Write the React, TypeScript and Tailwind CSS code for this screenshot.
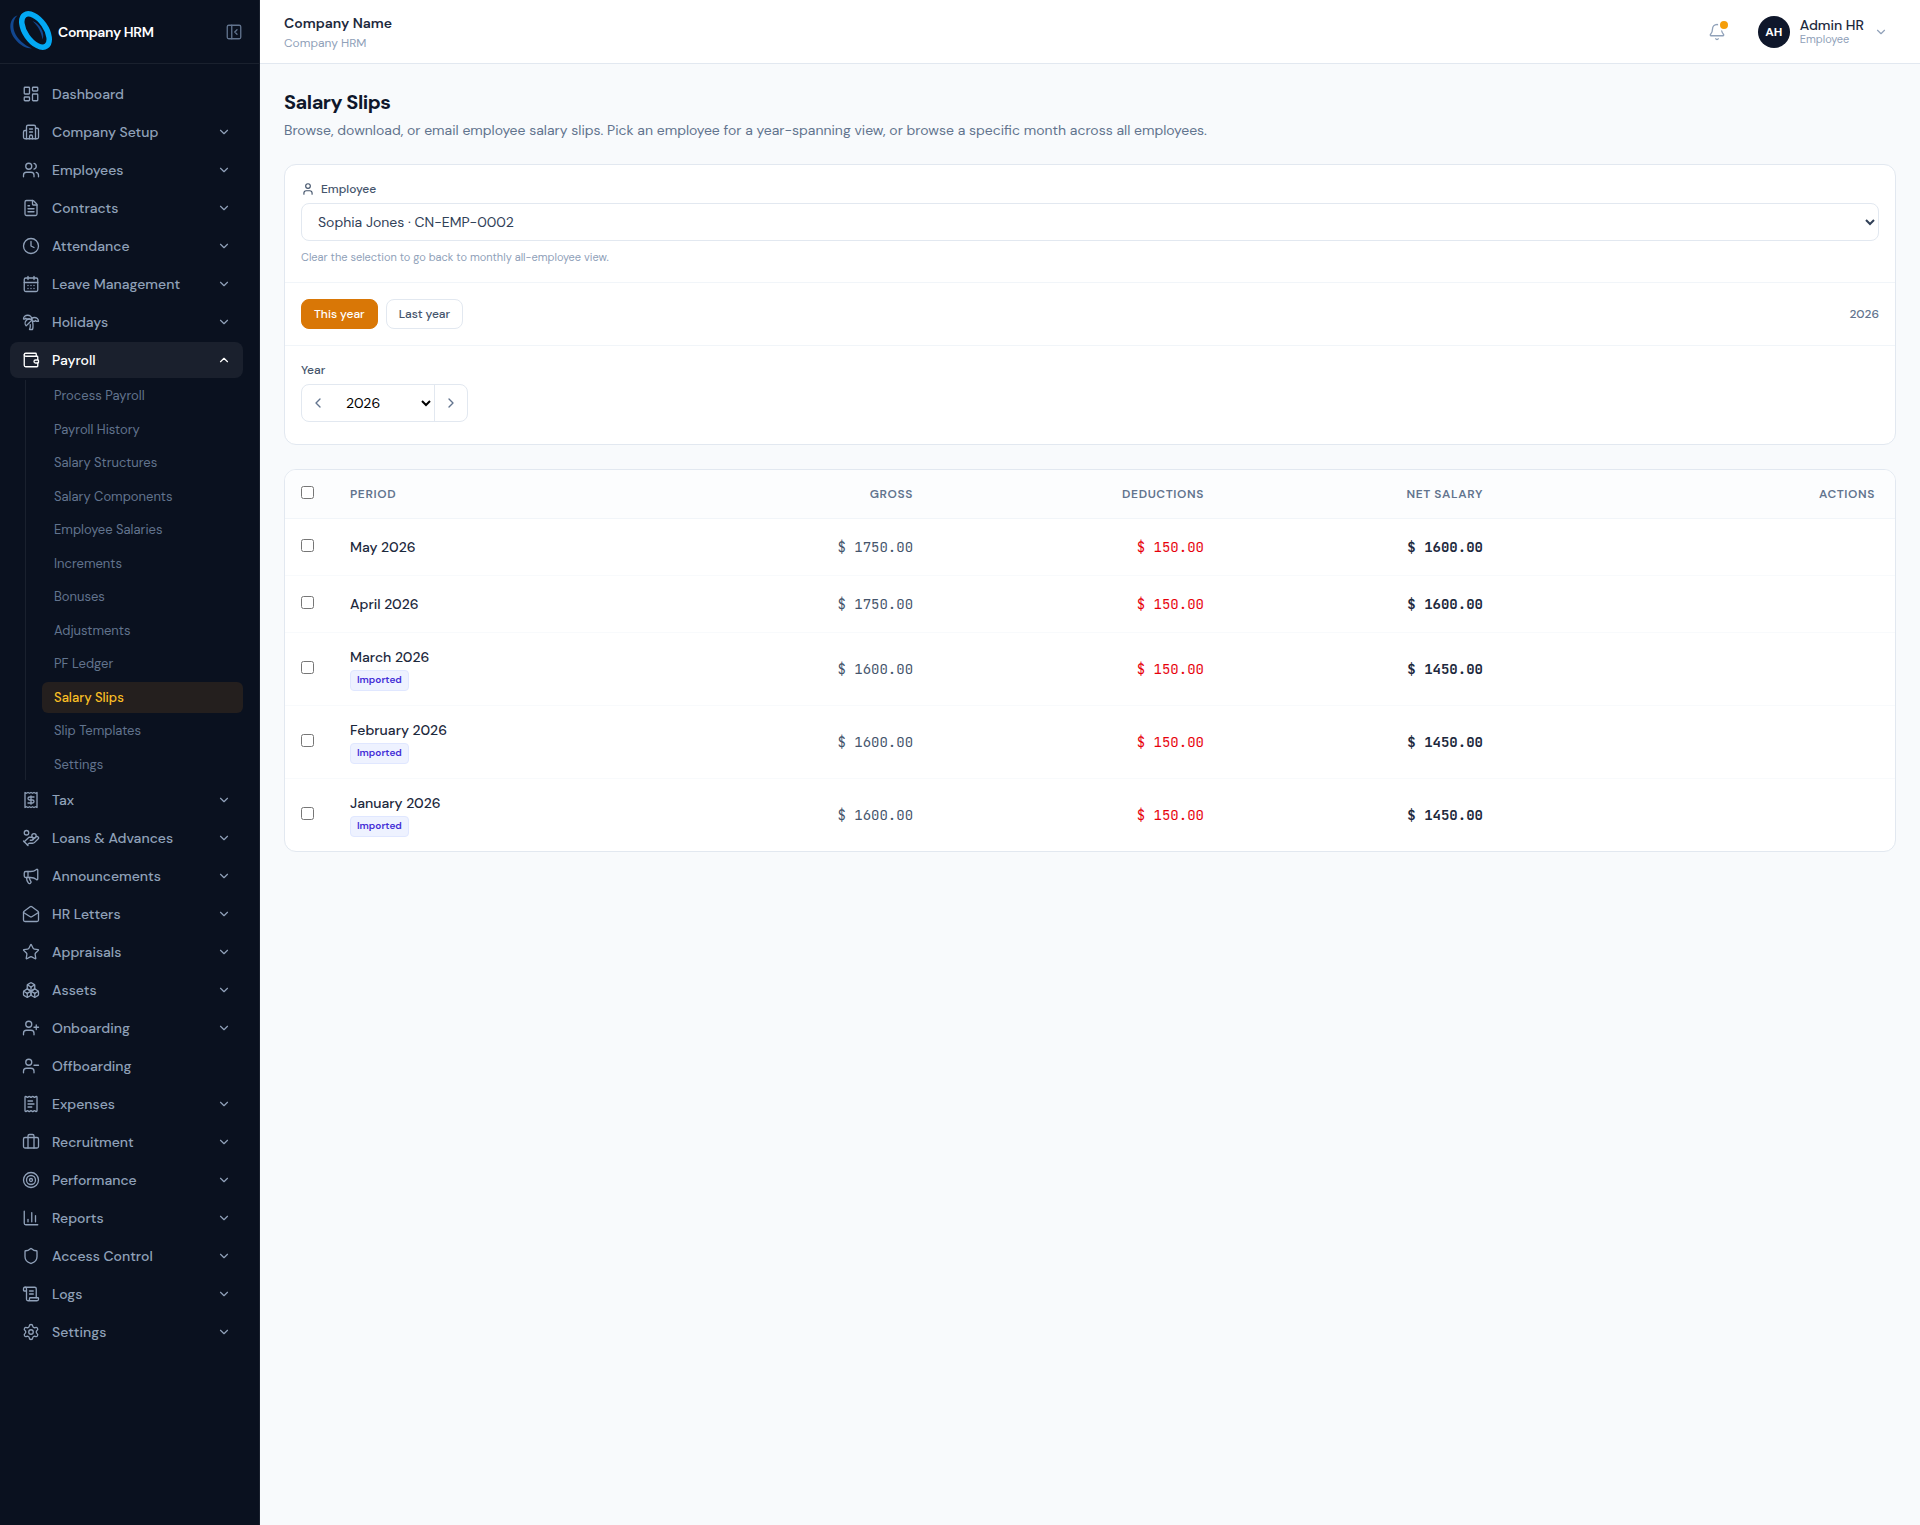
import { useState } from "react";
import {
  Boxes,
  Briefcase,
  Building2,
  CalendarDays,
  ChartColumn,
  ChevronDown,
  ChevronLeft,
  ChevronRight,
  ChevronUp,
  Clock,
  FileText,
  HandCoins,
  LayoutDashboard,
  MailOpen,
  Megaphone,
  PanelLeftClose,
  Receipt,
  ReceiptText,
  ScrollText,
  Settings,
  Shield,
  Star,
  Target,
  TreePalm,
  User,
  UserMinus,
  UserPlus,
  Users,
  Wallet,
  type LucideIcon,
} from "lucide-react";

type NavItem = { label: string; icon: LucideIcon; leaf?: boolean; children?: string[] };

const NAV: NavItem[] = [
  { label: "Dashboard", icon: LayoutDashboard, leaf: true },
  { label: "Company Setup", icon: Building2 },
  { label: "Employees", icon: Users },
  { label: "Contracts", icon: FileText },
  { label: "Attendance", icon: Clock },
  { label: "Leave Management", icon: CalendarDays },
  { label: "Holidays", icon: TreePalm },
  {
    label: "Payroll",
    icon: Wallet,
    children: [
      "Process Payroll",
      "Payroll History",
      "Salary Structures",
      "Salary Components",
      "Employee Salaries",
      "Increments",
      "Bonuses",
      "Adjustments",
      "PF Ledger",
      "Salary Slips",
      "Slip Templates",
      "Settings",
    ],
  },
  { label: "Tax", icon: Receipt },
  { label: "Loans & Advances", icon: HandCoins },
  { label: "Announcements", icon: Megaphone },
  { label: "HR Letters", icon: MailOpen },
  { label: "Appraisals", icon: Star },
  { label: "Assets", icon: Boxes },
  { label: "Onboarding", icon: UserPlus },
  { label: "Offboarding", icon: UserMinus, leaf: true },
  { label: "Expenses", icon: ReceiptText },
  { label: "Recruitment", icon: Briefcase },
  { label: "Performance", icon: Target },
  { label: "Reports", icon: ChartColumn },
  { label: "Access Control", icon: Shield },
  { label: "Logs", icon: ScrollText },
  { label: "Settings", icon: Settings },
];

const SLIPS = [
  { period: "May 2026", gross: "1750.00", deductions: "150.00", net: "1600.00", imported: false },
  { period: "April 2026", gross: "1750.00", deductions: "150.00", net: "1600.00", imported: false },
  { period: "March 2026", gross: "1600.00", deductions: "150.00", net: "1450.00", imported: true },
  { period: "February 2026", gross: "1600.00", deductions: "150.00", net: "1450.00", imported: true },
  { period: "January 2026", gross: "1600.00", deductions: "150.00", net: "1450.00", imported: true },
];

function Logo() {
  return (
    <svg viewBox="0 0 44 44" className="size-11 shrink-0" fill="none" aria-hidden="true">
      <path d="M9.5 5.5C1 8 0 20 7 29c5 6.5 11 9.5 17 9.5C16 35 9 29 6.5 22 4.5 16 5 9 9.5 5.5Z" fill="#12478f" />
      <path d="M24.5 11c7 2.5 13 12 10 18.5C33.5 22 30 16 24.5 11Z" fill="#12478f" />
      <ellipse cx="27.5" cy="20.5" rx="10.2" ry="19" transform="rotate(-35 27.5 20.5)" stroke="#03a9f4" strokeWidth="5.5" />
    </svg>
  );
}

function Sidebar() {
  return (
    <aside className="flex w-[260px] shrink-0 flex-col border-r border-[#1a212e] bg-[#0a111f]">
      <div className="flex h-16 items-center border-b border-[#1a212e] pr-4 pl-2">
        <Logo />
        <span className="ml-1.5 flex-1 text-sm font-semibold tracking-tight text-white">Company HRM</span>
        <button type="button" aria-label="Collapse sidebar" className="text-slate-500">
          <PanelLeftClose size={18} strokeWidth={1.75} />
        </button>
      </div>
      <nav className="flex flex-col gap-0.5 py-3 pr-4 pl-2.5">
        {NAV.map(({ label, icon: Icon, leaf, children }) => (
          <div key={label} className="flex flex-col gap-0.5">
            <button
              type="button"
              className={`flex h-9 items-center gap-3 rounded-lg px-3 text-left text-sm font-medium ${
                children ? "bg-[#1a202d] text-white" : "text-slate-400"
              }`}
            >
              <Icon size={18} strokeWidth={1.75} />
              <span className="flex-1">{label}</span>
              {!leaf && (children ? <ChevronUp size={14} /> : <ChevronDown size={14} />)}
            </button>
            {children && (
              <div className="ml-[15px] flex h-[400px] flex-col gap-0.5 border-l border-[#1a212e] pl-4">
                {children.map((child) => (
                  <a
                    key={child}
                    href="#"
                    className={`flex flex-1 items-center rounded-md px-3 text-[13px] ${
                      child === "Salary Slips" ? "bg-[#241f1e] font-medium text-[#fbbf24]" : "text-slate-500"
                    }`}
                  >
                    {child}
                  </a>
                ))}
              </div>
            )}
          </div>
        ))}
      </nav>
    </aside>
  );
}

function Header() {
  return (
    <header className="flex h-16 items-center justify-between border-b border-slate-200 bg-white px-6">
      <div>
        <p className="text-sm font-semibold text-slate-800">Company Name</p>
        <p className="mt-0.5 text-xs text-slate-400">Company HRM</p>
      </div>
      <div className="flex items-center gap-6">
        <button type="button" aria-label="Notifications" className="relative p-2 text-slate-400">
          <svg
            width="18"
            height="18"
            viewBox="0 0 24 24"
            fill="none"
            stroke="currentColor"
            strokeWidth="1.75"
            strokeLinecap="round"
            strokeLinejoin="round"
          >
            <path d="M10.268 21a2 2 0 0 0 3.464 0" />
            <path d="M3.262 15.326A1 1 0 0 0 4 17h16a1 1 0 0 0 .74-1.673C19.41 13.956 18 12.499 18 8A6 6 0 0 0 6 8c0 4.499-1.411 5.956-2.738 7.326" />
          </svg>
          <span className="absolute top-1 right-1 size-3 rounded-full border-2 border-white bg-[#f59e0b]" />
        </button>
        <button type="button" className="flex items-center pr-2 text-left">
          <span className="flex size-8 items-center justify-center rounded-full bg-slate-900 text-xs font-bold text-white">
            AH
          </span>
          <span className="ml-2.5">
            <span className="block text-sm leading-[14px] font-medium text-slate-800">Admin HR</span>
            <span className="block text-[11px] leading-[14px] text-slate-400">Employee</span>
          </span>
          <ChevronDown size={14} className="ml-2.5 text-slate-400" />
        </button>
      </div>
    </header>
  );
}

function Filters() {
  const [employee, setEmployee] = useState("CN-EMP-0002");
  const [year, setYear] = useState("2026");

  return (
    <section className="rounded-xl border border-slate-200 bg-white">
      <div className="border-b border-slate-100 p-4">
        <label htmlFor="employee" className="mb-1.5 flex items-center gap-1.5 text-xs font-medium text-slate-600">
          <User size={14} />
          Employee
        </label>
        <select
          id="employee"
          value={employee}
          onChange={(e) => setEmployee(e.target.value)}
          className="h-[38px] w-full rounded-lg border border-slate-200 bg-white px-3 text-sm text-slate-700"
        >
          <option value="CN-EMP-0002">Sophia Jones · CN-EMP-0002</option>
        </select>
        <p className="mt-2 text-[11px] leading-[17px] text-slate-400">
          Clear the selection to go back to monthly all-employee view.
        </p>
      </div>

      <div className="flex items-center justify-between border-b border-slate-100 p-4">
        <div className="flex gap-2">
          <button
            type="button"
            className="h-[30px] rounded-lg border border-[#d97706] bg-[#d97706] px-3 text-xs font-medium text-white"
          >
            This year
          </button>
          <button
            type="button"
            className="h-[30px] rounded-lg border border-slate-200 px-3 text-xs font-medium text-slate-600"
          >
            Last year
          </button>
        </div>
        <span className="text-xs font-medium text-slate-500">2026</span>
      </div>

      <div className="px-4 pt-4 pb-5.5">
        <label htmlFor="year" className="mb-1.5 block text-xs font-medium text-slate-600">
          Year
        </label>
        <div className="inline-flex h-[38px] overflow-hidden rounded-lg border border-slate-200 align-top">
          <button type="button" aria-label="Previous year" className="flex w-8 items-center justify-center text-slate-500">
            <ChevronLeft size={16} />
          </button>
          <select
            id="year"
            value={year}
            onChange={(e) => setYear(e.target.value)}
            className="w-25 bg-white pl-2 text-sm text-black"
          >
            <option>2026</option>
          </select>
          <button
            type="button"
            aria-label="Next year"
            className="flex w-[33px] items-center justify-center border-l border-slate-200 text-slate-500"
          >
            <ChevronRight size={16} />
          </button>
        </div>
      </div>
    </section>
  );
}

function SlipsTable() {
  const amount = "px-5 text-right font-['JetBrains_Mono','DejaVu_Sans_Mono',monospace]";

  return (
    <section className="overflow-hidden rounded-xl border border-slate-200 bg-white">
      <table className="w-full table-fixed border-separate border-spacing-0 text-sm">
        <colgroup>
          <col className="w-[45px]" />
          <col />
          <col className="w-[18%]" />
          <col className="w-[18.07%]" />
          <col className="w-[17.33%]" />
          <col className="w-[24.35%]" />
        </colgroup>
        <thead>
          <tr className="h-[49px] bg-[#fcfdfe] text-xs text-slate-500 *:border-b *:border-slate-100">
            <th className="px-4 pb-[3px]">
              <input type="checkbox" aria-label="Select all" className="block size-[13px]" />
            </th>
            <th className="px-5 text-left font-semibold tracking-wider">PERIOD</th>
            <th className="px-5 text-right font-semibold tracking-wider">GROSS</th>
            <th className="px-5 text-right font-semibold tracking-wider">DEDUCTIONS</th>
            <th className="px-5 text-right font-semibold tracking-wider">NET SALARY</th>
            <th className="px-5 text-right font-semibold tracking-wider">ACTIONS</th>
          </tr>
        </thead>
        <tbody>
          {SLIPS.map((slip) => (
            <tr key={slip.period} className="h-[57px] *:border-b *:border-slate-50 last:*:border-b-0">
              <td className="px-4 pb-[3px]">
                <input type="checkbox" aria-label={`Select ${slip.period}`} className="block size-[13px]" />
              </td>
              <td className="px-5 py-3.5 font-medium text-slate-800">
                <div>{slip.period}</div>
                {slip.imported && (
                  <span className="mt-[3px] flex h-[21px] w-fit items-center rounded border border-indigo-100 bg-indigo-50 px-1.5 text-[10px] font-semibold text-indigo-700">
                    Imported
                  </span>
                )}
              </td>
              <td className={`${amount} text-slate-600`}>$ {slip.gross}</td>
              <td className={`${amount} text-red-600`}>$ {slip.deductions}</td>
              <td className={`${amount} font-semibold text-slate-800`}>$ {slip.net}</td>
              <td />
            </tr>
          ))}
        </tbody>
      </table>
    </section>
  );
}

function App() {
  return (
    <div className="flex min-h-screen bg-slate-50 font-['DM_Sans',Inter,sans-serif]">
      <Sidebar />
      <div className="min-w-0 flex-1">
        <Header />
        <main className="p-6">
          <h1 className="text-xl font-bold tracking-tight text-slate-900">Salary Slips</h1>
          <p className="mt-1 mb-6 text-sm text-slate-500">
            Browse, download, or email employee salary slips. Pick an employee for a year-spanning view, or browse a
            specific month across all employees.
          </p>
          <div className="flex flex-col gap-6">
            <Filters />
            <SlipsTable />
          </div>
        </main>
      </div>
    </div>
  );
}

export default App;
